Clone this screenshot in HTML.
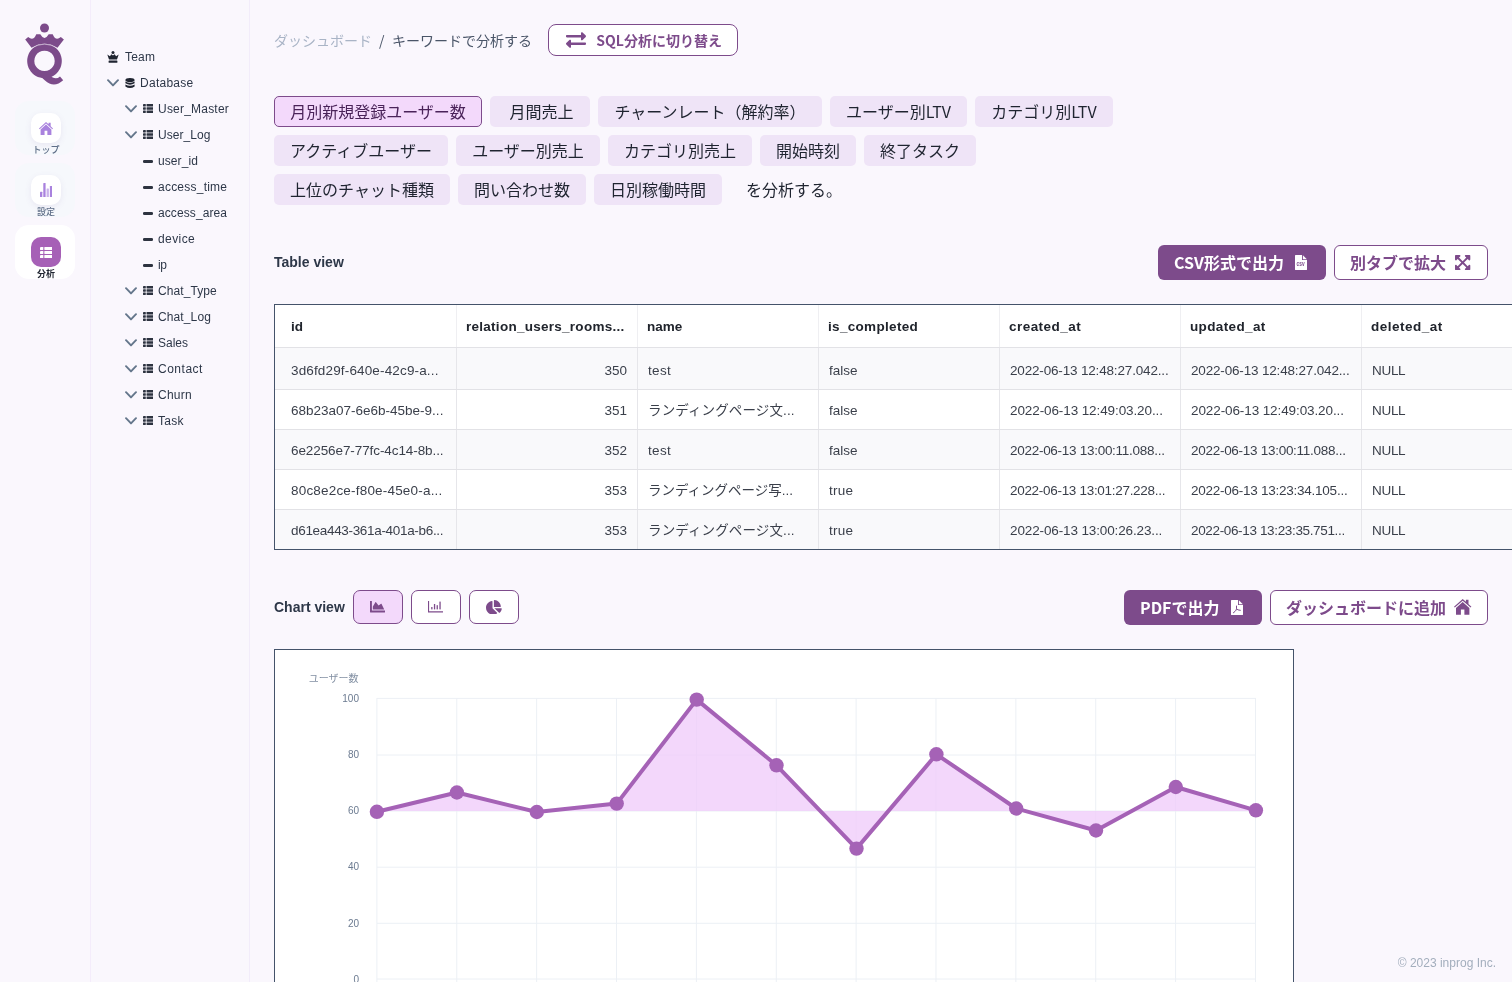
<!DOCTYPE html>
<html lang="ja">
<head>
<meta charset="utf-8">
<title>キーワードで分析する</title>
<style>
*{box-sizing:border-box;margin:0;padding:0}
html,body{width:1512px;height:982px;overflow:hidden}
body{background:#faf7fd;font-family:"Liberation Sans","Noto Sans CJK JP",sans-serif;color:#2d3748;position:relative}
.abs{position:absolute}
#nav{position:absolute;left:0;top:0;width:91px;height:982px;border-right:1px solid #f4ecfb}
#tree{position:absolute;left:91px;top:0;width:159px;height:982px;border-right:1px solid #f2ecfa}
.navitem{position:absolute;left:15px;width:60px;height:54px;border-radius:14px;text-align:center}
.navicon{position:absolute;left:16px;top:12px;width:30px;height:30px;border-radius:10px;background:#fff;box-shadow:0 2px 6px rgba(120,90,160,.10)}
.navlabel{position:absolute;left:1px;width:60px;top:43.5px;font-size:9px;line-height:10px;color:#5f6f88;font-weight:500;font-family:"Noto Sans CJK JP","Liberation Sans",sans-serif}
.tr{position:absolute;font-size:12px;line-height:16px;color:#2d3748;white-space:nowrap}
.jp{font-family:"Noto Sans CJK JP","Liberation Sans",sans-serif}
.tag{position:absolute;height:31px;border-radius:5px;background:#efe4f7;font-size:16px;line-height:31px;text-align:center;color:#1f2430;font-family:"Noto Sans CJK JP","Liberation Sans",sans-serif;white-space:nowrap}
.tag.sel{background:#f3d9fb;border:1px solid #7d4b8b;line-height:29px;color:#4a2359}
.btn{position:absolute;height:35px;border-radius:6px;font-family:"Noto Sans CJK JP","Liberation Sans",sans-serif;font-weight:700;font-size:16px;white-space:nowrap}
.btn.fill{background:#7d4b8b;color:#fff}
.btn.line{background:#fff;border:1px solid #7d4b8b;color:#7d4b8b}
.btn span{position:absolute;top:0;line-height:33px}
.btn.fill span{line-height:35px}
h3{position:absolute;font-size:14px;line-height:18px;font-weight:700;color:#2d3748}
#tbl{position:absolute;left:274px;top:304px;width:1300px;height:246px;border:1px solid #44536a;background:#fff}
.row{position:absolute;left:0;width:1298px;height:40px;border-bottom:1px solid #e2e2e6}
.row.odd{background:#f9f9fb}
.cell{position:absolute;top:0;height:100%;width:181px;border-right:1px solid #e6e6ea;font-size:13.5px;line-height:41px;font-family:"Liberation Sans","Noto Sans CJK JP",sans-serif;padding:0 10px 0 11px;color:#3a3f4a;white-space:nowrap;overflow:hidden}
.hd .cell{font-weight:700;color:#20242c;line-height:44px;border-right-color:#efeff2}
.cell.num{text-align:right}
.cbtn{position:absolute;top:590px;width:50px;height:34px;border-radius:7px;border:1px solid #7d4b8b;background:#fff}
.cbtn.sel{background:#f3d9fb}
#chart{position:absolute;left:274px;top:649px;width:1020px;height:340px;border:1px solid #44536a;background:#fff}
#main{position:absolute;left:0;top:0;width:1512px;height:982px;overflow:hidden}
#nav,#tree,#main{will-change:transform}
</style>
</head>
<body>
<div id="nav">
<svg class="abs" style="left:20px;top:20px" width="50" height="70" viewBox="20 20 50 70">
<g fill="#7c4b8a">
<circle cx="44.5" cy="28" r="4.5"/>
<path d="M25.2 39.4 L28.2 36.9 Q33.2 41.6 36.3 34.2 L40.3 34.2 Q44.5 41.6 48.7 34.2 L52.7 34.2 Q55.8 41.6 60.8 36.9 L63.9 39.4 L57.3 48 Q44.5 39.5 31.7 48 Z"/>
<path fill-rule="evenodd" d="M44.5 43.6 A17.3 17.3 0 1 1 44.49 43.6 Z M44.5 50.7 A10.2 10.2 0 1 0 44.51 50.7 Z"/>
<path d="M31.2 48.3 Q44.5 39.9 57.8 48.3" fill="none" stroke="#faf7fd" stroke-width="0.6"/>
<path d="M40 76 L49.5 74.5 Q55 81 60 76.5 L63.2 80.2 Q54 88.5 45 80.5 Z"/>
</g></svg>
<div class="navitem" style="top:101px;background:#f6f8fc;">
<div class="navicon" style="">
<svg class="abs" style="left:7.9px;top:8.8px" width="14" height="13.2" viewBox="0 0 17.4 15.8" preserveAspectRatio="none"><path fill="#a982de" d="M8.7 0 L0 7.7 L0.8 8.6 L8.7 1.7 L16.6 8.6 L17.4 7.7 L14.5 5.1 V0.8 H11.9 V2.8 Z M8.7 3 L2 8.9 V15.8 H6.9 V10.6 H10.4 V15.8 H15.4 V8.9 Z"/></svg>
</div>
<div class="navlabel" style="">トップ</div></div>
<div class="navitem" style="top:163px;background:#f6f8fc;">
<div class="navicon" style="">
<svg class="abs" style="left:8.9px;top:7.9px" width="12.2" height="14.6" viewBox="0 0 12.2 14.6"><g fill="#a982de"><rect x="0" y="8.8" width="2.3" height="5.8" rx="0.5"/><rect x="3.3" y="0" width="2.3" height="14.6" rx="0.5"/><rect x="6.6" y="5.6" width="2.3" height="9" rx="0.5" opacity=".6"/><rect x="9.9" y="3" width="2.3" height="11.6" rx="0.5"/></g></svg>
</div>
<div class="navlabel" style="">設定</div></div>
<div class="navitem" style="top:225px;background:#fff;">
<div class="navicon" style="background:#a660b6;box-shadow:none;">
<svg class="abs" style="left:8.5px;top:9.9px" width="12.8" height="11.1" viewBox="0 0 13 11.8" preserveAspectRatio="none"><g fill="#fff"><rect x="0" y="0" width="3.4" height="3.2" rx="0.5"/><rect x="4.4" y="0" width="8.6" height="3.2" rx="0.5"/><rect x="0" y="4.3" width="3.4" height="3.2" rx="0.5"/><rect x="4.4" y="4.3" width="8.6" height="3.2" rx="0.5"/><rect x="0" y="8.6" width="3.4" height="3.2" rx="0.5"/><rect x="4.4" y="8.6" width="8.6" height="3.2" rx="0.5"/></g></svg>
</div>
<div class="navlabel" style="color:#1f2430;font-weight:700;">分析</div></div>
</div>
<div id="tree">
<svg class="abs" style="left:16px;top:51px" width="12" height="12" viewBox="0 0 12 12"><g fill="#1f2430"><circle cx="6" cy="1.6" r="1.5"/><path d="M0.3 3.6 L2.9 5.3 L4.4 3.2 L6 4.6 L7.6 3.2 L9.1 5.3 L11.7 3.6 L10 8.6 H2 Z"/><rect x="1.6" y="9.4" width="8.8" height="2.3" rx="0.5"/></g></svg>
<div class="tr" style="left:34px;top:49px;letter-spacing:0.22px">Team</div>
<svg class="abs" style="left:16px;top:79px" width="12" height="8" viewBox="0 0 12 8"><path d="M1 1.2 L6 6.4 L11 1.2" fill="none" stroke="#64768b" stroke-width="1.9" stroke-linecap="round" stroke-linejoin="round"/></svg>
<svg class="abs" style="left:34px;top:78px" width="10" height="11" viewBox="0 0 10 11"><g fill="#1f2430"><ellipse cx="5" cy="2" rx="4.6" ry="2"/><path d="M0.4 3.4 Q5 6.2 9.6 3.4 V5.3 Q5 8.1 0.4 5.3 Z"/><path d="M0.4 6.4 Q5 9.2 9.6 6.4 V8.4 Q5 11.6 0.4 8.4 Z"/></g></svg>
<div class="tr" style="left:49px;top:75px;letter-spacing:0.27px">Database</div>
<svg class="abs" style="left:34px;top:105px" width="12" height="8" viewBox="0 0 12 8"><path d="M1 1.2 L6 6.4 L11 1.2" fill="none" stroke="#64768b" stroke-width="1.9" stroke-linecap="round" stroke-linejoin="round"/></svg>
<svg class="abs" style="left:52px;top:104px" width="10.3" height="9" viewBox="0 0 11 9" preserveAspectRatio="none"><g fill="#2d3340"><rect x="0" y="0" width="3" height="2.4" rx="0.4"/><rect x="3.8" y="0" width="7.2" height="2.4" rx="0.4"/><rect x="0" y="3.3" width="3" height="2.4" rx="0.4"/><rect x="3.8" y="3.3" width="7.2" height="2.4" rx="0.4"/><rect x="0" y="6.6" width="3" height="2.4" rx="0.4"/><rect x="3.8" y="6.6" width="7.2" height="2.4" rx="0.4"/></g></svg>
<div class="tr" style="left:67px;top:101px;letter-spacing:0.21px">User_Master</div>
<svg class="abs" style="left:34px;top:131px" width="12" height="8" viewBox="0 0 12 8"><path d="M1 1.2 L6 6.4 L11 1.2" fill="none" stroke="#64768b" stroke-width="1.9" stroke-linecap="round" stroke-linejoin="round"/></svg>
<svg class="abs" style="left:52px;top:130px" width="10.3" height="9" viewBox="0 0 11 9" preserveAspectRatio="none"><g fill="#2d3340"><rect x="0" y="0" width="3" height="2.4" rx="0.4"/><rect x="3.8" y="0" width="7.2" height="2.4" rx="0.4"/><rect x="0" y="3.3" width="3" height="2.4" rx="0.4"/><rect x="3.8" y="3.3" width="7.2" height="2.4" rx="0.4"/><rect x="0" y="6.6" width="3" height="2.4" rx="0.4"/><rect x="3.8" y="6.6" width="7.2" height="2.4" rx="0.4"/></g></svg>
<div class="tr" style="left:67px;top:127px;letter-spacing:0.05px">User_Log</div>
<div class="abs" style="left:52px;top:160px;width:10px;height:2.6px;border-radius:1.3px;background:#2d3340"></div>
<div class="tr" style="left:67px;top:153px;letter-spacing:0.09px">user_id</div>
<div class="abs" style="left:52px;top:186px;width:10px;height:2.6px;border-radius:1.3px;background:#2d3340"></div>
<div class="tr" style="left:67px;top:179px;letter-spacing:0.23px">access_time</div>
<div class="abs" style="left:52px;top:212px;width:10px;height:2.6px;border-radius:1.3px;background:#2d3340"></div>
<div class="tr" style="left:67px;top:205px;letter-spacing:0.1px">access_area</div>
<div class="abs" style="left:52px;top:238px;width:10px;height:2.6px;border-radius:1.3px;background:#2d3340"></div>
<div class="tr" style="left:67px;top:231px;letter-spacing:0.42px">device</div>
<div class="abs" style="left:52px;top:264px;width:10px;height:2.6px;border-radius:1.3px;background:#2d3340"></div>
<div class="tr" style="left:67px;top:257px;letter-spacing:-0.34px">ip</div>
<svg class="abs" style="left:34px;top:287px" width="12" height="8" viewBox="0 0 12 8"><path d="M1 1.2 L6 6.4 L11 1.2" fill="none" stroke="#64768b" stroke-width="1.9" stroke-linecap="round" stroke-linejoin="round"/></svg>
<svg class="abs" style="left:52px;top:286px" width="10.3" height="9" viewBox="0 0 11 9" preserveAspectRatio="none"><g fill="#2d3340"><rect x="0" y="0" width="3" height="2.4" rx="0.4"/><rect x="3.8" y="0" width="7.2" height="2.4" rx="0.4"/><rect x="0" y="3.3" width="3" height="2.4" rx="0.4"/><rect x="3.8" y="3.3" width="7.2" height="2.4" rx="0.4"/><rect x="0" y="6.6" width="3" height="2.4" rx="0.4"/><rect x="3.8" y="6.6" width="7.2" height="2.4" rx="0.4"/></g></svg>
<div class="tr" style="left:67px;top:283px;letter-spacing:0.08px">Chat_Type</div>
<svg class="abs" style="left:34px;top:313px" width="12" height="8" viewBox="0 0 12 8"><path d="M1 1.2 L6 6.4 L11 1.2" fill="none" stroke="#64768b" stroke-width="1.9" stroke-linecap="round" stroke-linejoin="round"/></svg>
<svg class="abs" style="left:52px;top:312px" width="10.3" height="9" viewBox="0 0 11 9" preserveAspectRatio="none"><g fill="#2d3340"><rect x="0" y="0" width="3" height="2.4" rx="0.4"/><rect x="3.8" y="0" width="7.2" height="2.4" rx="0.4"/><rect x="0" y="3.3" width="3" height="2.4" rx="0.4"/><rect x="3.8" y="3.3" width="7.2" height="2.4" rx="0.4"/><rect x="0" y="6.6" width="3" height="2.4" rx="0.4"/><rect x="3.8" y="6.6" width="7.2" height="2.4" rx="0.4"/></g></svg>
<div class="tr" style="left:67px;top:309px;letter-spacing:0.12px">Chat_Log</div>
<svg class="abs" style="left:34px;top:339px" width="12" height="8" viewBox="0 0 12 8"><path d="M1 1.2 L6 6.4 L11 1.2" fill="none" stroke="#64768b" stroke-width="1.9" stroke-linecap="round" stroke-linejoin="round"/></svg>
<svg class="abs" style="left:52px;top:338px" width="10.3" height="9" viewBox="0 0 11 9" preserveAspectRatio="none"><g fill="#2d3340"><rect x="0" y="0" width="3" height="2.4" rx="0.4"/><rect x="3.8" y="0" width="7.2" height="2.4" rx="0.4"/><rect x="0" y="3.3" width="3" height="2.4" rx="0.4"/><rect x="3.8" y="3.3" width="7.2" height="2.4" rx="0.4"/><rect x="0" y="6.6" width="3" height="2.4" rx="0.4"/><rect x="3.8" y="6.6" width="7.2" height="2.4" rx="0.4"/></g></svg>
<div class="tr" style="left:67px;top:335px;letter-spacing:-0.01px">Sales</div>
<svg class="abs" style="left:34px;top:365px" width="12" height="8" viewBox="0 0 12 8"><path d="M1 1.2 L6 6.4 L11 1.2" fill="none" stroke="#64768b" stroke-width="1.9" stroke-linecap="round" stroke-linejoin="round"/></svg>
<svg class="abs" style="left:52px;top:364px" width="10.3" height="9" viewBox="0 0 11 9" preserveAspectRatio="none"><g fill="#2d3340"><rect x="0" y="0" width="3" height="2.4" rx="0.4"/><rect x="3.8" y="0" width="7.2" height="2.4" rx="0.4"/><rect x="0" y="3.3" width="3" height="2.4" rx="0.4"/><rect x="3.8" y="3.3" width="7.2" height="2.4" rx="0.4"/><rect x="0" y="6.6" width="3" height="2.4" rx="0.4"/><rect x="3.8" y="6.6" width="7.2" height="2.4" rx="0.4"/></g></svg>
<div class="tr" style="left:67px;top:361px;letter-spacing:0.51px">Contact</div>
<svg class="abs" style="left:34px;top:391px" width="12" height="8" viewBox="0 0 12 8"><path d="M1 1.2 L6 6.4 L11 1.2" fill="none" stroke="#64768b" stroke-width="1.9" stroke-linecap="round" stroke-linejoin="round"/></svg>
<svg class="abs" style="left:52px;top:390px" width="10.3" height="9" viewBox="0 0 11 9" preserveAspectRatio="none"><g fill="#2d3340"><rect x="0" y="0" width="3" height="2.4" rx="0.4"/><rect x="3.8" y="0" width="7.2" height="2.4" rx="0.4"/><rect x="0" y="3.3" width="3" height="2.4" rx="0.4"/><rect x="3.8" y="3.3" width="7.2" height="2.4" rx="0.4"/><rect x="0" y="6.6" width="3" height="2.4" rx="0.4"/><rect x="3.8" y="6.6" width="7.2" height="2.4" rx="0.4"/></g></svg>
<div class="tr" style="left:67px;top:387px;letter-spacing:0.23px">Churn</div>
<svg class="abs" style="left:34px;top:417px" width="12" height="8" viewBox="0 0 12 8"><path d="M1 1.2 L6 6.4 L11 1.2" fill="none" stroke="#64768b" stroke-width="1.9" stroke-linecap="round" stroke-linejoin="round"/></svg>
<svg class="abs" style="left:52px;top:416px" width="10.3" height="9" viewBox="0 0 11 9" preserveAspectRatio="none"><g fill="#2d3340"><rect x="0" y="0" width="3" height="2.4" rx="0.4"/><rect x="3.8" y="0" width="7.2" height="2.4" rx="0.4"/><rect x="0" y="3.3" width="3" height="2.4" rx="0.4"/><rect x="3.8" y="3.3" width="7.2" height="2.4" rx="0.4"/><rect x="0" y="6.6" width="3" height="2.4" rx="0.4"/><rect x="3.8" y="6.6" width="7.2" height="2.4" rx="0.4"/></g></svg>
<div class="tr" style="left:67px;top:413px;letter-spacing:0.27px">Task</div>
</div>
<div id="main">
<div class="abs jp" style="left:274px;top:30px;font-size:14px;line-height:20px;color:#a9b4c6;white-space:nowrap">ダッシュボード</div>
<div class="abs jp" style="left:379px;top:30px;font-size:14px;line-height:20px;color:#4a5568;white-space:nowrap">/</div>
<div class="abs jp" style="left:392px;top:30px;font-size:14px;line-height:20px;color:#4a5568;white-space:nowrap">キーワードで分析する</div>
<div class="btn line" style="left:548px;top:24px;width:190px;height:32px;font-size:14px;border-radius:8px"><svg class="abs" style="left:16.7px;top:5px" width="20" height="20" viewBox="0 0 512 512" preserveAspectRatio="none"><path fill="#7d4b8b" d="M0 168v-16c0-13.255 10.745-24 24-24h360V80c0-21.367 25.899-32.042 40.971-16.971l80 80c9.372 9.373 9.372 24.569 0 33.941l-80 80C409.956 271.982 384 261.456 384 240v-48H24c-13.255 0-24-10.745-24-24zm488 152H128v-48c0-21.314-25.862-32.08-40.971-16.971l-80 80c-9.372 9.373-9.372 24.569 0 33.941l80 80C102.057 463.997 128 453.437 128 432v-48h360c13.255 0 24-10.745 24-24v-16c0-13.255-10.745-24-24-24z"/></svg><span style="left:47.3px;line-height:30px">SQL分析に切り替え</span></div>
<div class="tag sel" style="left:274px;top:96px;width:208px">月別新規登録ユーザー数</div>
<div class="tag" style="left:490px;top:96px;width:100px;padding-left:3px">月間売上</div>
<div class="tag" style="left:598px;top:96px;width:224px">チャーンレート（解約率）</div>
<div class="tag" style="left:830px;top:96px;width:137px">ユーザー別LTV</div>
<div class="tag" style="left:975px;top:96px;width:138px">カテゴリ別LTV</div>
<div class="tag" style="left:274px;top:135px;width:174px">アクティブユーザー</div>
<div class="tag" style="left:456px;top:135px;width:144px">ユーザー別売上</div>
<div class="tag" style="left:608px;top:135px;width:144px">カテゴリ別売上</div>
<div class="tag" style="left:760px;top:135px;width:96px">開始時刻</div>
<div class="tag" style="left:864px;top:135px;width:112px">終了タスク</div>
<div class="tag" style="left:274px;top:174px;width:176px">上位のチャット種類</div>
<div class="tag" style="left:458px;top:174px;width:128px">問い合わせ数</div>
<div class="tag" style="left:594px;top:174px;width:128px">日別稼働時間</div>
<div class="abs jp" style="left:746px;top:174px;font-size:16px;line-height:31px;color:#1f2430;white-space:nowrap">を分析する。</div>
<h3 style="left:274px;top:253px">Table view</h3>
<div class="btn fill" style="left:1158px;top:245px;width:168px"><span style="left:16px">CSV形式で出力</span><svg class="abs" style="left:137.2px;top:9.9px" width="12" height="15.1" viewBox="0 0 12 15"><path fill="#fff" d="M0.6 0 H7 V5 H12 V14.4 Q12 15 11.4 15 H0.6 Q0 15 0 14.4 V0.6 Q0 0 0.6 0Z"/><path fill="#fff" d="M7.9 0.1 L11.9 4.1 H7.9 Z"/><text transform="translate(5.6 11.4) scale(1 1.45)" x="0" y="0" font-size="4.8" font-weight="700" text-anchor="middle" fill="#7d4b8b" font-family="Liberation Sans, sans-serif">csv</text></svg></div>
<div class="btn line" style="left:1334px;top:245px;width:154px"><span style="left:15px">別タブで拡大</span><svg class="abs" style="left:120.4px;top:8.9px" width="15.3" height="15.1" viewBox="0 32 448 448" preserveAspectRatio="none"><path fill="#7d4b8b" d="M448 344v112a23.94 23.94 0 0 1-24 24H312c-21.39 0-32.09-25.9-17-41l36.2-36.2L224 295.6 116.77 402.9 153 439c15.09 15.1 4.39 41-17 41H24a23.94 23.94 0 0 1-24-24V344c0-21.4 25.89-32.1 41-17l36.19 36.2L184.46 256 77.18 148.7 41 185c-15.1 15.1-41 4.4-41-17V56a23.94 23.94 0 0 1 24-24h112c21.39 0 32.09 25.9 17 41l-36.2 36.2L224 216.4l107.23-107.3L295 73c-15.09-15.1-4.39-41 17-41h112a23.94 23.94 0 0 1 24 24v112c0 21.4-25.89 32.1-41 17l-36.19-36.2L263.54 256l107.28 107.3L407 327.1c15.1-15.2 41-4.5 41 16.9z"/></svg></div>
<div id="tbl">
<div class="row hd" style="top:0;height:43px">
<div class="cell" style="left:0px;width:182px;padding-left:16px;">id</div>
<div class="cell" style="left:182px;width:181px;padding-left:9px;letter-spacing:0.27px;">relation_users_rooms...</div>
<div class="cell" style="left:363px;width:181px;padding-left:9px;letter-spacing:0.01px;">name</div>
<div class="cell" style="left:544px;width:181px;padding-left:9px;letter-spacing:0.32px;">is_completed</div>
<div class="cell" style="left:725px;width:181px;padding-left:9px;letter-spacing:0.46px;">created_at</div>
<div class="cell" style="left:906px;width:181px;padding-left:9px;letter-spacing:0.36px;">updated_at</div>
<div class="cell" style="left:1087px;width:181px;padding-left:9px;letter-spacing:0.49px;">deleted_at</div>
</div>
<div class="row odd" style="top:43px;height:42px;">
<div class="cell" style="left:0px;width:182px;padding-left:16px;padding-top:2px;letter-spacing:0.15px;">3d6fd29f-640e-42c9-a...</div>
<div class="cell num" style="left:182px;width:181px;padding-left:10px;padding-top:2px;">350</div>
<div class="cell" style="left:363px;width:181px;padding-left:10px;padding-top:2px;letter-spacing:0.34px;">test</div>
<div class="cell" style="left:544px;width:181px;padding-left:10px;padding-top:2px;letter-spacing:-0.03px;">false</div>
<div class="cell" style="left:725px;width:181px;padding-left:10px;padding-top:2px;letter-spacing:-0.17px;">2022-06-13 12:48:27.042...</div>
<div class="cell" style="left:906px;width:181px;padding-left:10px;padding-top:2px;letter-spacing:-0.17px;">2022-06-13 12:48:27.042...</div>
<div class="cell" style="left:1087px;width:181px;padding-left:10px;padding-top:2px;letter-spacing:-0.31px;">NULL</div>
</div>
<div class="row" style="top:85px;height:40px;">
<div class="cell" style="left:0px;width:182px;padding-left:16px;">68b23a07-6e6b-45be-9...</div>
<div class="cell num" style="left:182px;width:181px;padding-left:10px;">351</div>
<div class="cell" style="left:363px;width:181px;padding-left:10px;letter-spacing:0.13px;">ランディングページ文...</div>
<div class="cell" style="left:544px;width:181px;padding-left:10px;letter-spacing:-0.03px;">false</div>
<div class="cell" style="left:725px;width:181px;padding-left:10px;letter-spacing:-0.1px;">2022-06-13 12:49:03.20...</div>
<div class="cell" style="left:906px;width:181px;padding-left:10px;letter-spacing:-0.1px;">2022-06-13 12:49:03.20...</div>
<div class="cell" style="left:1087px;width:181px;padding-left:10px;letter-spacing:-0.31px;">NULL</div>
</div>
<div class="row odd" style="top:125px;height:40px;">
<div class="cell" style="left:0px;width:182px;padding-left:16px;letter-spacing:-0.09px;">6e2256e7-77fc-4c14-8b...</div>
<div class="cell num" style="left:182px;width:181px;padding-left:10px;">352</div>
<div class="cell" style="left:363px;width:181px;padding-left:10px;letter-spacing:0.34px;">test</div>
<div class="cell" style="left:544px;width:181px;padding-left:10px;letter-spacing:-0.03px;">false</div>
<div class="cell" style="left:725px;width:181px;padding-left:10px;letter-spacing:-0.28px;">2022-06-13 13:00:11.088...</div>
<div class="cell" style="left:906px;width:181px;padding-left:10px;letter-spacing:-0.28px;">2022-06-13 13:00:11.088...</div>
<div class="cell" style="left:1087px;width:181px;padding-left:10px;letter-spacing:-0.31px;">NULL</div>
</div>
<div class="row" style="top:165px;height:40px;">
<div class="cell" style="left:0px;width:182px;padding-left:16px;letter-spacing:0.19px;">80c8e2ce-f80e-45e0-a...</div>
<div class="cell num" style="left:182px;width:181px;padding-left:10px;">353</div>
<div class="cell" style="left:363px;width:181px;padding-left:10px;">ランディングページ写...</div>
<div class="cell" style="left:544px;width:181px;padding-left:10px;letter-spacing:0.28px;">true</div>
<div class="cell" style="left:725px;width:181px;padding-left:10px;letter-spacing:-0.3px;">2022-06-13 13:01:27.228...</div>
<div class="cell" style="left:906px;width:181px;padding-left:10px;letter-spacing:-0.25px;">2022-06-13 13:23:34.105...</div>
<div class="cell" style="left:1087px;width:181px;padding-left:10px;letter-spacing:-0.31px;">NULL</div>
</div>
<div class="row odd" style="top:205px;height:39px;border-bottom:none;">
<div class="cell" style="left:0px;width:182px;padding-left:16px;letter-spacing:-0.32px;">d61ea443-361a-401a-b6...</div>
<div class="cell num" style="left:182px;width:181px;padding-left:10px;">353</div>
<div class="cell" style="left:363px;width:181px;padding-left:10px;letter-spacing:0.13px;">ランディングページ文...</div>
<div class="cell" style="left:544px;width:181px;padding-left:10px;letter-spacing:0.28px;">true</div>
<div class="cell" style="left:725px;width:181px;padding-left:10px;letter-spacing:-0.13px;">2022-06-13 13:00:26.23...</div>
<div class="cell" style="left:906px;width:181px;padding-left:10px;letter-spacing:-0.35px;">2022-06-13 13:23:35.751...</div>
<div class="cell" style="left:1087px;width:181px;padding-left:10px;letter-spacing:-0.31px;">NULL</div>
</div>
</div>
<h3 style="left:274px;top:597.5px">Chart view</h3>
<div class="cbtn sel" style="left:353px"><svg class="abs" style="left:16.2px;top:10.3px" width="15.2" height="11.4" viewBox="0 64 512 384" preserveAspectRatio="none"><path fill="#7d4b8b" d="M500 384c6.6 0 12 5.4 12 12v40c0 6.6-5.4 12-12 12H12c-6.6 0-12-5.4-12-12V76c0-6.6 5.4-12 12-12h40c6.6 0 12 5.4 12 12v308h436zM372.7 159.5L288 216l-85.3-113.7c-5.1-6.8-15.5-6.3-19.9 1L96 248v104h384l-89.9-187.8c-3.2-6.5-11.4-8.7-17.4-4.7z"/></svg></div>
<div class="cbtn" style="left:411px"><svg class="abs" style="left:16.3px;top:10.3px" width="15.2" height="11.4" viewBox="0 0 15.2 11.4"><g fill="#7d4b8b"><path d="M0 0 H1.1 V10.3 H15.2 V11.4 H0 Z"/><rect x="3.2" y="6" width="1.3" height="2.4"/><rect x="5.9" y="3" width="1.3" height="5.4"/><rect x="8.6" y="4.2" width="1.3" height="4.2"/><rect x="11.4" y="0.6" width="1.3" height="7.8"/></g></svg></div>
<div class="cbtn" style="left:469px"><svg class="abs" style="left:16.1px;top:8.7px" width="15.8" height="14.7" viewBox="0 0 544 512" preserveAspectRatio="none"><path fill="#7d4b8b" d="M527.79 288H290.5l158.03 158.03c6.04 6.04 15.98 6.53 22.19.68 38.7-36.46 65.32-85.61 73.13-140.86 1.34-9.46-6.51-17.85-16.06-17.85zm-15.83-64.8C503.72 103.74 408.26 8.28 288.8.04 279.68-.59 272 7.1 272 16.24V240h223.77c9.14 0 16.82-7.68 16.19-16.8zM224 288V50.71c0-9.55-8.39-17.4-17.84-16.06C86.99 51.49-4.1 155.6.14 280.37 4.5 408.51 114.83 513.59 243.03 511.98c50.4-.63 96.97-16.87 135.26-44.03 7.9-5.6 8.42-17.23 1.57-24.08L224 288z"/></svg></div>
<div class="btn fill" style="left:1124px;top:590px;width:138px"><span style="left:16px">PDFで出力</span><svg class="abs" style="left:107px;top:9.9px" width="12" height="15.1" viewBox="0 0 12 15"><path fill="#fff" d="M0.6 0 H7 V5 H12 V14.4 Q12 15 11.4 15 H0.6 Q0 15 0 14.4 V0.6 Q0 0 0.6 0Z"/><path fill="#fff" d="M7.9 0.1 L11.9 4.1 H7.9 Z"/><g fill="none" stroke="#7d4b8b" stroke-width="1" stroke-linecap="round"><path d="M5.5 6 V8.6 Q5.5 10 4 11.4 L2.4 12.7"/><path d="M5.5 8.8 Q6.4 10.2 9.3 10.3"/></g></svg></div>
<div class="btn line" style="left:1270px;top:590px;width:218px"><span style="left:15px">ダッシュボードに追加</span><svg class="abs" style="left:183.2px;top:8.4px" width="17.4" height="15.8" viewBox="0 0 17.4 15.8"><path fill="#7d4b8b" d="M8.7 0 L0 7.7 L0.8 8.6 L8.7 1.7 L16.6 8.6 L17.4 7.7 L14.5 5.1 V0.8 H11.9 V2.8 Z M8.7 3 L2 8.9 V15.8 H6.9 V10.6 H10.4 V15.8 H15.4 V8.9 Z"/></svg></div>
<div id="chart"><svg class="abs" style="left:0;top:0" width="1018" height="332" viewBox="275 650 1018 332">
<g stroke="#ecf0f5" stroke-width="1">
<path d="M377 698.40 H1255.9"/>
<path d="M377 755.00 H1255.9"/>
<path d="M377 811.00 H1255.9"/>
<path d="M377 867.20 H1255.9"/>
<path d="M377 923.30 H1255.9"/>
<path d="M377 979.00 H1255.9"/>
<path d="M376.90 698 V990"/>
<path d="M456.77 698 V990"/>
<path d="M536.64 698 V990"/>
<path d="M616.51 698 V990"/>
<path d="M696.38 698 V990"/>
<path d="M776.25 698 V990"/>
<path d="M856.12 698 V990"/>
<path d="M935.99 698 V990"/>
<path d="M1015.86 698 V990"/>
<path d="M1095.73 698 V990"/>
<path d="M1175.60 698 V990"/>
<path d="M1255.47 698 V990"/>
</g>
<path d="M376.9 811 L376.9 811.8 L456.9 792.5 L536.8 812 L616.7 803.6 L696.7 699.6 L776.5 765.3 L856.5 848.6 L936.4 754.3 L1016.2 808.5 L1096 830.5 L1175.8 787 L1255.9 810.3 L1255.9 811 Z" fill="#f0ccfa" fill-opacity=".78"/>
<path d="M376.9 811.8 L456.9 792.5 L536.8 812 L616.7 803.6 L696.7 699.6 L776.5 765.3 L856.5 848.6 L936.4 754.3 L1016.2 808.5 L1096 830.5 L1175.8 787 L1255.9 810.3" fill="none" stroke="#a562b6" stroke-width="4" stroke-linejoin="round"/>
<circle cx="376.9" cy="811.8" r="7.2" fill="#a562b6"/>
<circle cx="456.9" cy="792.5" r="7.2" fill="#a562b6"/>
<circle cx="536.8" cy="812" r="7.2" fill="#a562b6"/>
<circle cx="616.7" cy="803.6" r="7.2" fill="#a562b6"/>
<circle cx="696.7" cy="699.6" r="7.2" fill="#a562b6"/>
<circle cx="776.5" cy="765.3" r="7.2" fill="#a562b6"/>
<circle cx="856.5" cy="848.6" r="7.2" fill="#a562b6"/>
<circle cx="936.4" cy="754.3" r="7.2" fill="#a562b6"/>
<circle cx="1016.2" cy="808.5" r="7.2" fill="#a562b6"/>
<circle cx="1096" cy="830.5" r="7.2" fill="#a562b6"/>
<circle cx="1175.8" cy="787" r="7.2" fill="#a562b6"/>
<circle cx="1255.9" cy="810.3" r="7.2" fill="#a562b6"/>
<g font-family="Liberation Sans, sans-serif" font-size="10" fill="#6b7a90" text-anchor="end">
<text x="359" y="701.70">100</text>
<text x="359" y="757.95">80</text>
<text x="359" y="814.20">60</text>
<text x="359" y="870.45">40</text>
<text x="359" y="926.70">20</text>
<text x="359" y="982.95">0</text>
</g>
<text x="358.5" y="682" font-size="10" fill="#8390a3" text-anchor="end" font-family="Noto Sans CJK JP, sans-serif">ユーザー数</text>
</svg></div>
<div class="abs" style="right:16px;top:956px;font-size:12px;line-height:14px;color:#a3aebd;white-space:nowrap">© 2023 inprog Inc.</div>
</div>
</body>
</html>
